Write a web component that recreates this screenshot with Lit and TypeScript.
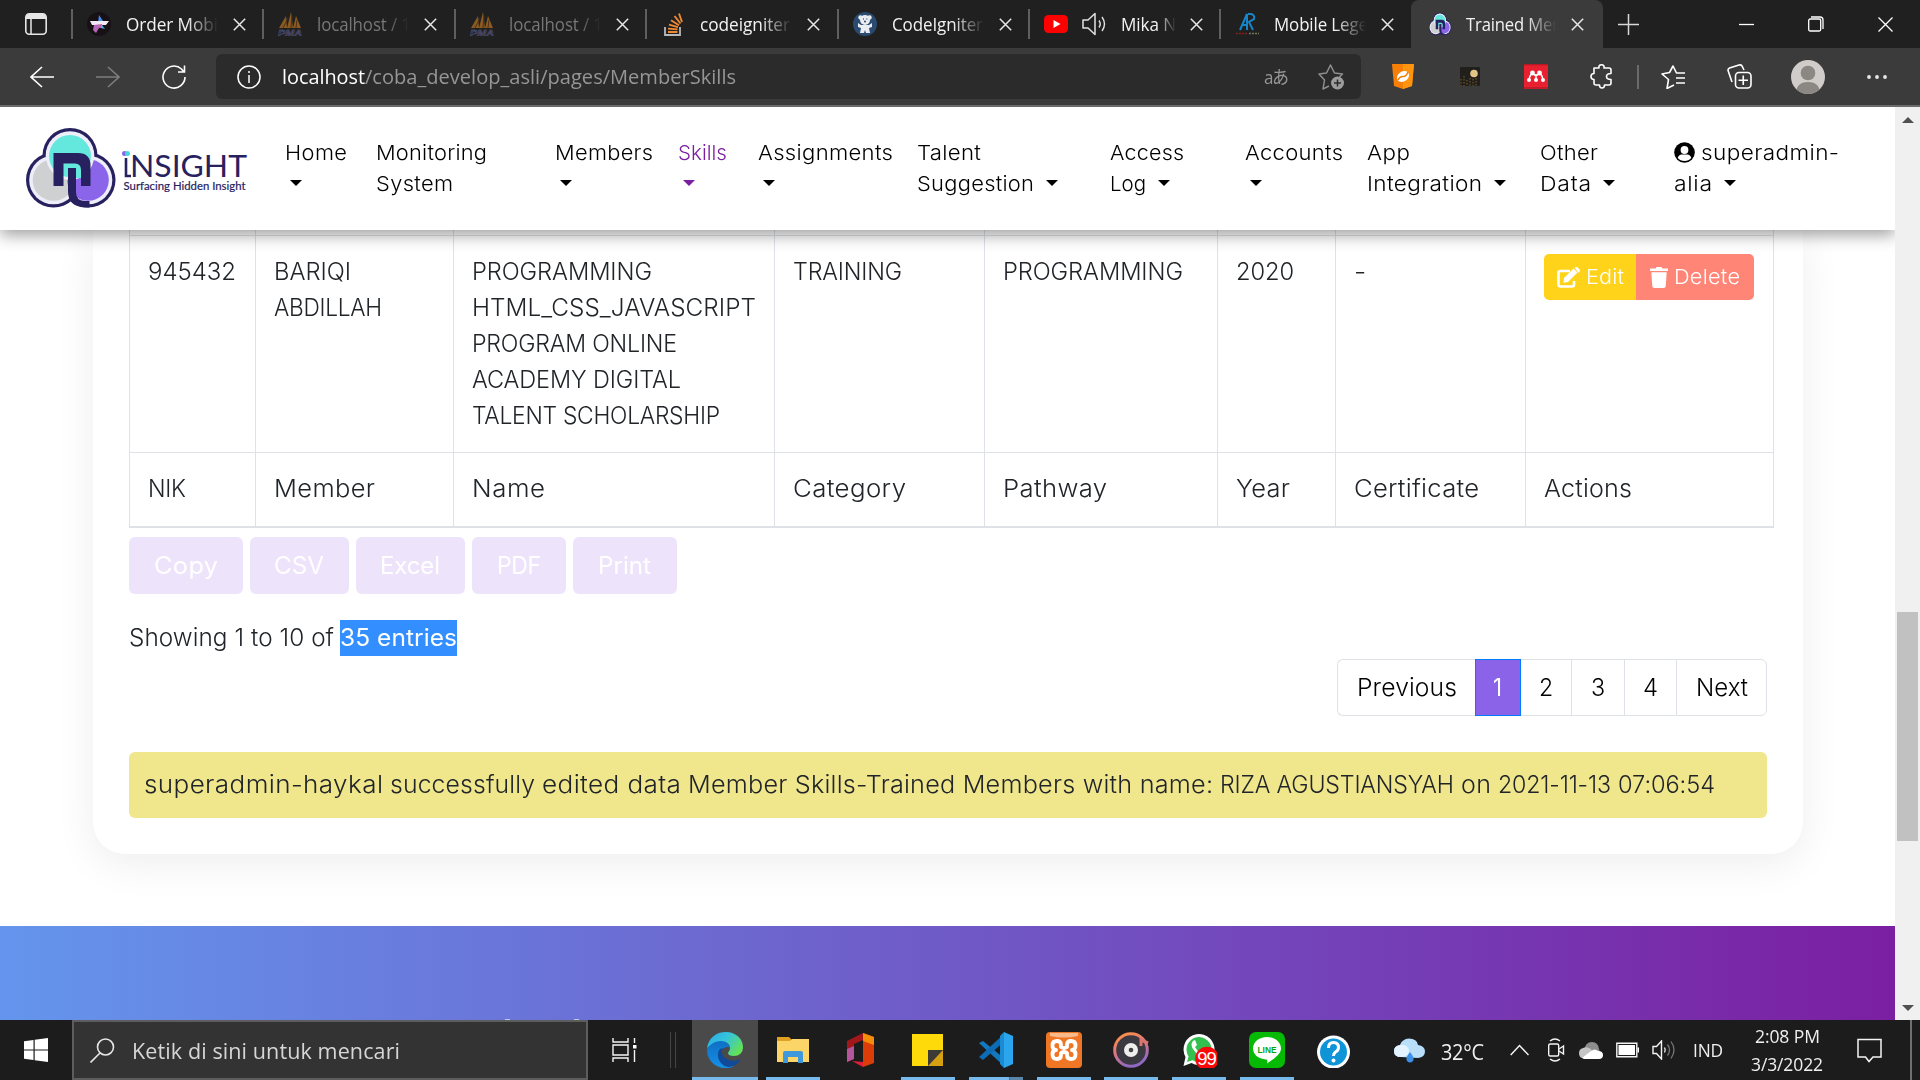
import { LitElement, html, css, svg, nothing } from "lit";
import { customElement, property } from "lit/decorators.js";
import { classMap } from "lit/directives/class-map.js";
import { styleMap } from "lit/directives/style-map.js";

/** One line of text whose glyph width and tracking are adjusted so that it fills a given width. */
@customElement("fit-text")
class FitText extends LitElement {
  @property({ type: Number }) w = 0;
  @property() t = "";

  static styles = css`
    :host { display: inline-block; white-space: pre; }
    .run { display: inline-block; font-variant-ligatures: none; transform-origin: 0 50%; }
  `;

  render() {
    return html`<span class="run">${this.t}</span>`;
  }

  updated() {
    const run = this.renderRoot.querySelector<HTMLElement>(".run")!;
    run.style.letterSpacing = "0";
    run.style.transform = "none";
    const natural = run.getBoundingClientRect().width;
    const scale = Math.min(1.12, Math.max(0.92, 1 + (this.w / natural - 1) * 0.75));
    const step = (this.w / scale - natural) / Math.max(1, this.t.length - 1);
    run.style.letterSpacing = `${step.toFixed(3)}px`;
    run.style.marginRight = `${(this.w - this.w / scale - step).toFixed(3)}px`;
    run.style.transform = `scaleX(${scale.toFixed(4)})`;
  }
}

const fit = (t: string, w: number, cls = "") => html`<fit-text class=${cls} .t=${t} .w=${w}></fit-text>`;

const icon = (w: number, h: number, body: unknown, cls = "") =>
  html`<svg class="ico ${cls}" width=${w} height=${h} viewBox="0 0 ${w} ${h}" fill="none">${body}</svg>`;

const cloverMark = svg`
  <g fill="#27225f"><circle cx="55" cy="35.5" r="27.5"/><circle cx="38.500" cy="60" r="27.500"/><circle cx="73" cy="60" r="27.500"/></g>
  <g fill="#eeeef8"><circle cx="38.500" cy="60" r="24.300"/><circle cx="73" cy="60" r="24.300"/><circle cx="55" cy="35.500" r="24.300"/></g>
  <circle cx="38.500" cy="60" r="20.800" fill="#cfd0d2"/>
  <circle cx="73" cy="60" r="20.800" fill="#8a65ea"/>
  <circle cx="55" cy="36" r="24" fill="#eeeef8"/>
  <circle cx="55" cy="36" r="21" fill="#64e8dd"/>
  <path d="M48 44v12h5v-8h8v10h5V50q0-6-6-6z" fill="#64e8dd"/>
  <path d="M38.500 33H63q12.500 0 12.500 12.500V66H66V50q0-6.500-6-6.500H48.500V66h-10z" fill="#27225f"/>
  <path d="M53 48h8v24q0 8.500 8.500 9h5v6.500h-5Q53 86.500 53 71z" fill="#27225f"/>`;

const closeX = icon(13, 13, svg`<path d="M.8.8l11.400 11.400M12.200.8L.8 12.200" stroke="#e8e8e8" stroke-width="1.500"/>`);

const pma = icon(24, 24, svg`
  <path d="M1 16L8 4l1 12zM9 16L13 0l2 16zM15 16l3-12 5 12z" fill="#8a5a22"/>
  <path d="M5 16l5-10M13 16l1-12M18 16l1-8" stroke="#4b3216"/>
  <text x="0" y="24" font-size="9.500" font-weight="700" font-style="italic" font-family="Liberation Sans, sans-serif" fill="#24243c" stroke="#66668a" stroke-width=".4" textLength="24" lengthAdjust="spacingAndGlyphs">PMA</text>`);

const favicons = {
  order: icon(24, 24, svg`<circle cx="12" cy="12" r="12" fill="#171116"/><path d="M12 3l4 6-5 2z" fill="#4a8df0"/><path d="M3 9h19l-3 4H5z" fill="#f3e9f4"/><path d="M7 13l8-1 1 4-4 0-3 5-3-3z" fill="#b566b5"/><path d="M14 12l4 5-4-1z" fill="#46b3ec"/>`),
  pma,
  stack: icon(24, 24, svg`<path d="M4 15v8h15v-8" stroke="#b6b9bb" stroke-width="1.800"/><path d="M7 20h9.500M7 16.600l9.500.8M8 12.600l9 2.500M10 8.300l8 5M13.500 4l6 7.500M18 1.500l3 8.500" stroke="#f08a32" stroke-width="1.900"/>`),
  bear: icon(24, 24, svg`<circle cx="12" cy="12" r="12" fill="#2b4a70"/><g fill="#e9edf1"><circle cx="7.500" cy="5.500" r="2.200"/><circle cx="16.500" cy="5.500" r="2.200"/><circle cx="12" cy="8" r="5"/><path d="M5 11l3 2h8l3-2v4l-3 1 1 5h-4l-1-3-1 3H7l1-5-3-1z"/></g><path d="M10 7h.8M13.500 7h.8M11 9.500h2" stroke="#2b4a70" stroke-width="1.300"/>`),
  youtube: icon(24, 18, svg`<rect width="24" height="18" rx="4.500" fill="#f00"/><path d="M9.500 5l7 4-7 4z" fill="#fff"/>`),
  ar: icon(24, 24, svg`<path d="M5 18L12 2v16M8 13h4M13 2h3q4 1 3 5l-5 3 4 8" stroke="#1686c9" stroke-width="2"/><path d="M1 21.500h12" stroke="#8d1d1d" stroke-width="1.500" stroke-dasharray="2 1"/><path d="M14 21.500h10" stroke="#777760" stroke-width="1.500" stroke-dasharray="2 1"/>`),
  clover: html`<svg class="ico" width="24" height="24" viewBox="8 6 95 84" preserveAspectRatio="none">${cloverMark}</svg>`,
};

const speaker = icon(24, 24, svg`<path d="M1 8h5l7-6.500v21L6 16H1z" stroke="#e2e2e2" stroke-width="1.500" stroke-linejoin="round"/><path d="M17 8.500q2.500 3.500 0 7M20 5q5 7 0 14" stroke="#e2e2e2" stroke-width="1.400"/>`);

interface Tab { fav: keyof typeof favicons; title: string; w: number; dim?: boolean; sound?: boolean; active?: boolean }
const tabs: Tab[] = [
  { fav: "order", title: "Order Mobi", w: 92 },
  { fav: "pma", title: "localhost / 1", w: 94, dim: true },
  { fav: "pma", title: "localhost / 1", w: 94, dim: true },
  { fav: "stack", title: "codeigniter", w: 90 },
  { fav: "bear", title: "CodeIgniter", w: 91 },
  { fav: "youtube", title: "Mika N", w: 55, sound: true },
  { fav: "ar", title: "Mobile Lege", w: 94 },
  { fav: "clover", title: "Trained Mer", w: 93, active: true },
];

interface NavItem { col: number; a: string; aw: number; b?: string; bw?: number; caret?: boolean; active?: boolean; user?: boolean }
const nav: NavItem[] = [
  { col: 90.5, a: "Home", aw: 62, caret: true },
  { col: 179, a: "Monitoring", aw: 111, b: "System", bw: 77 },
  { col: 123, a: "Members", aw: 98, caret: true },
  { col: 80, a: "Skills", aw: 49, caret: true, active: true },
  { col: 159.5, a: "Assignments", aw: 135, caret: true },
  { col: 193, a: "Talent", aw: 64, b: "Suggestion", bw: 117, caret: true },
  { col: 135, a: "Access", aw: 74, b: "Log", bw: 36, caret: true },
  { col: 122, a: "Accounts", aw: 98, caret: true },
  { col: 173, a: "App", aw: 43, b: "Integration", bw: 115, caret: true },
  { col: 134, a: "Other", aw: 58, b: "Data", bw: 51, caret: true },
  { col: 180, a: "superadmin-", aw: 138, b: "alia", bw: 38, caret: true, user: true },
];

type Line = [string, number];
const row: Line[][] = [
  [["945432", 88]],
  [["BARIQI", 77], ["ABDILLAH", 108]],
  [["PROGRAMMING", 180], ["HTML_CSS_JAVASCRIPT", 284], ["PROGRAM ONLINE", 205], ["ACADEMY DIGITAL", 209], ["TALENT SCHOLARSHIP", 248]],
  [["TRAINING", 109]],
  [["PROGRAMMING", 180]],
  [["2020", 58]],
  [["-", 13]],
];
const foot: Line[] = [["NIK", 38], ["Member", 101], ["Name", 73], ["Category", 113], ["Pathway", 104], ["Year", 54], ["Certificate", 125], ["Actions", 88]];
const exportsBar: [string, number, number][] = [["Copy", 64, 114], ["CSV", 50, 99], ["Excel", 60, 109.5], ["PDF", 44, 94], ["Print", 53, 104]];
const pages: [string, number, number, boolean][] = [["Previous", 100, 138, false], ["1", 8, 46, true], ["2", 14, 50, false], ["3", 14, 53, false], ["4", 15, 52, false], ["Next", 52, 91, false]];
const notice: Line[] = [
  ["superadmin-haykal", 239],
  ["successfully", 145],
  ["edited data", 139],
  ["Member Skills-Trained Members with name:", 525],
  ["RIZA AGUSTIANSYAH", 234],
  ["on", 30],
  ["2021-11-13", 113],
  ["07:06:54", 97],
];

const apps = [
  { bar: 66, cls: "current", art: svg`
    <defs><linearGradient id="eg" x1="0" y1="0" x2="1" y2=".6"><stop offset="0" stop-color="#2aa8e8"/><stop offset=".5" stop-color="#35c3dc"/><stop offset="1" stop-color="#62e05a"/></linearGradient>
    <linearGradient id="eb" x1="0" y1="0" x2="0" y2="1"><stop offset="0" stop-color="#0f6fc4"/><stop offset="1" stop-color="#1590e6"/></linearGradient></defs>
    <path d="M0 17C1 6 9 0 19 0c10 0 17 7 17 15 0 6-4 9-9 9-4 0-6-1-6-3 0-1 2-2 2-5 0-4-4-6-8-6C8 10 2 13 0 17z" fill="url(#eg)"/>
    <path d="M0 18c2-5 7-9 14-9 5 0 9 3 9 7-2-2-9-1-9 6 0 8 7 12 13 12-3 2-7 2-9 2C8 36 0 28 0 18z" fill="url(#eb)"/>
    <path d="M13 17c-3 3-3 11 2 15 5 5 13 4 19-5-6 3-13 2-17-2-2-3-3-5-1-9z" fill="#114a99"/>` },
  { bar: 54, art: svg`<path d="M2 5h12l3 3v4H2z" fill="#e0a021"/><path d="M2 9h13l2-2h17v23H2z" fill="#fbd568"/><path d="M8 31V21q0-2 2-2h16q2 0 2 2v10h-5v-6H13v6z" fill="#3f97dc"/>` },
  { bar: 0, art: svg`<path d="M4 9L20 1v7l-9 4v15l-7 3z" fill="#a3171b"/><path d="M4 17l7-3v13l-7 3z" fill="#b4569b"/><path d="M20 1l11 4v26l-11 4z" fill="#dc3d08"/><path d="M20 1l11 4v8l-11-4z" fill="#f48d0c"/><path d="M9 29l11 1v5z" fill="#e01e37"/>` },
  { bar: 54, art: svg`<path d="M2 2h31v19L20 34H2z" fill="#ffda0b"/><path d="M18 34V19l15-1v16z" fill="#d6a013"/><path d="M18 34V18h15z" fill="#3e3a35"/>` },
  { bar: 54, cls: "split", art: svg`<path d="M1 11l4-2 22 18v8z" fill="#1279c0"/><path d="M1 25l4 3L27 9V1z" fill="#0d6cb5"/><path d="M26 0l9 4v28l-9 4z" fill="#2ba6ee"/><path d="M26 0v36l-4-4V4z" fill="#1b8bd4"/>` },
  { bar: 54, art: svg`<rect width="36" height="36" rx="4" fill="#ef7624"/><path d="M4 1h28v3q-14 3-28 0z" fill="#f9b98a"/><path d="M15 13q0-4-4-4-4.500 0-4.500 4.500Q6.500 18 10 18q-3.500 0-3.500 4.500T11 27q4 0 4-4v-2q3-2 6 0v2q0 4 4 4 4.500 0 4.500-4.500Q29.500 18 26 18q3.500 0 3.500-4.500T25 9q-4 0-4 4v2q-3 2-6 0z" stroke="#fff" stroke-width="3.800" stroke-linejoin="round"/>` },
  { bar: 54, art: svg`<defs><linearGradient id="dg" x1="0" y1="0" x2=".4" y2="1"><stop offset="0" stop-color="#ff9440"/><stop offset=".5" stop-color="#e0777d"/><stop offset="1" stop-color="#8f6ac2"/></linearGradient></defs><circle cx="18" cy="18" r="16.300" stroke="url(#dg)" stroke-width="3" fill="#3a3840"/><circle cx="18" cy="18" r="7" fill="#eee"/><circle cx="18" cy="18" r="2.300" fill="#444"/><path d="M28 14V8l7 3" stroke="#d9776e" stroke-width="3"/>` },
  { bar: 54, art: svg`<path d="M2.500 34l2-9a15.500 15.500 0 1 1 6 6z" fill="#fff"/><path d="M6 30l1.600-5.500a12.500 12.500 0 1 1 4 3.800z" fill="#34c04e"/><path d="M12 9q-3 3 0 8 4 6 9 8 4 0 5-4l-4-2-2 2q-4-2-6-6l2-2-2-5z" fill="#fff"/><circle cx="26" cy="26.500" r="11.800" fill="#fb0909"/><text x="26" y="33" text-anchor="middle" font-size="18.500" font-family="Liberation Sans, sans-serif" fill="#fff" textLength="19.500">99</text>` },
  { bar: 54, art: svg`<rect width="36" height="36" rx="7" fill="#05b905"/><path d="M18 5c8 0 14 5 14 11.500 0 6-8 11-14 15 1-3 0-4-1-4C9 27 4 22 4 16.500 4 10 10 5 18 5z" fill="#fff"/><text x="18" y="20.500" text-anchor="middle" font-size="9.500" font-weight="700" font-family="Liberation Sans, sans-serif" fill="#0aa50a" textLength="19" lengthAdjust="spacingAndGlyphs">LINE</text>` },
  { bar: 0, art: svg`<circle cx="16.500" cy="20" r="16.500" fill="#fff"/><circle cx="16.500" cy="20" r="13.500" fill="#0f94d8"/><path d="M11.500 16q0-5.500 5-5.500t5 5q0 3-3 4.500-2 1.500-2 4" stroke="#fff" stroke-width="3"/><circle cx="16.500" cy="28.500" r="2" fill="#fff"/>` },
];

@customElement("app-root")
class AppRoot extends LitElement {
  static styles = css`
    :host { display: block; width: 1920px; height: 1080px; overflow: hidden; }
    * { box-sizing: border-box; }
    .screen { width: 1920px; height: 1080px; display: flex; flex-direction: column; background: #fff; font-family: Inter, "Open Sans", sans-serif; }
    .ico { display: block; flex: none; }

    .tabstrip { flex: none; height: 48px; background: #202020; display: flex; align-items: center; font: 17.5px/24px "Open Sans", "Noto Sans", sans-serif; color: #f2f2f2; }
    .tabmenu { width: 71px; padding-left: 25px; }
    .tab { flex: none; width: 191.4px; height: 30px; border-left: 2px solid #5f5f5f; display: flex; align-items: center; padding-left: 14px; }
    .tab.active { width: 192px; height: 48px; background: #3b3b3b; border: 0; border-radius: 8px 8px 0 0; padding-left: 17px; }
    .tab .name { width: 94px; margin-left: 15px; overflow: hidden; height: 25px; mask-image: linear-gradient(90deg, #000 65%, transparent 98%); }
    .tab.active .name { width: 92px; margin-left: 14px; }
    .tab .sound { margin-left: 14px; }
    .tab .sound + .name { width: 56px; }
    .tab .name + .ico { margin-left: 13px; }
    .dim .name { color: #777; }
    .tab.dim .name { mask-image: linear-gradient(90deg, #000 75%, transparent 98%); }
    .plus { margin-left: 15px; }
    .wincontrols { flex: 1; display: flex; justify-content: flex-end; align-items: center; gap: 54px; padding-right: 27px; }

    .toolbar { flex: none; height: 59px; background: #3b3b3b; border-bottom: 2px solid #6b6b6b; display: flex; align-items: center; padding-left: 30px; }
    .navbtns { display: flex; gap: 42px; }
    .address { margin-left: 30px; width: 1145px; height: 45px; border-radius: 6px; background: #2b2b2b; display: flex; align-items: center; padding: 0 17px 0 21px; font: 20px/28px "Open Sans", "Noto Sans", sans-serif; color: #969696; }
    .address .url { flex: 1; margin-left: 21px; }
    .host { color: #fff; }
    .aa { font: 18.5px/28px "Open Sans", "Noto Sans CJK JP", sans-serif; margin-right: 29px; }
    .exts { display: grid; grid-template-columns: 68px 63.5px 66.500px 47px 24px 66px 64px 76px 24px; margin-left: 31px; align-items: center; }
    .vbar { width: 2px; height: 24px; background: #6a6a6a; }

    .viewport { flex: none; height: 913px; display: flex; }
    .page { width: 1895px; display: flex; flex-direction: column; overflow: hidden; background: #fff; }
    .navbar { position: relative; z-index: 2; flex: none; height: 123px; background: #fff; box-shadow: 0 5px 15px rgba(0, 0, 0, .38); display: flex; color: #000; font-size: 20.500px; line-height: 31px; }
    .logo { margin: 13px 0 0 15px; width: 270px; }
    .menu { display: grid; padding-top: 30px; height: 92px; font-weight: 340; }
    .item.active { color: #7b1fa2; }
    .item { white-space: nowrap; }
    .caret { display: inline-block; border: 6px solid transparent; border-top-color: currentColor; border-bottom: 0; vertical-align: 5px; margin-left: 5px; }
    .text + .caret { margin-left: 12px; }
    .user { display: flex; height: 31px; align-items: center; gap: 6px; }

    .body { flex: none; height: 696px; padding: 0 92px 0 93px; }
    .card { height: 624px; background: #fff; border-radius: 0 0 32px 32px; box-shadow: 0 10px 40px rgba(0, 0, 0, .07); padding: 0 29px 0 36px; color: #212529; font-size: 24px; line-height: 36px; font-weight: 340; }
    .table { width: 1645px; border-right: 1px solid #dee2e6; }
    .tr { display: grid; grid-template-columns: 126px 198px 321px 210px 233px 118px 190px 248px; }
    .td { border-left: 1px solid #dee2e6; border-bottom: 1px solid #dee2e6; padding: 18px; display: flex; flex-direction: column; white-space: nowrap; }
    .peek .td { padding: 0; height: 6px; }
    .last .td { border-bottom-width: 2px; height: 75px; }
    .actions { display: flex; font-size: 20.500px; line-height: 46px; height: 46px; color: #fff; width: 210px; }
    .btn { display: flex; align-items: center; gap: 5px; padding-left: 13px; }
    .edit { width: 92px; background: #ffd31a; border-radius: 5px 0 0 5px; }
    .delete { width: 118px; background: #ff8577; border-radius: 0 5px 5px 0; gap: 6px; padding-left: 14px; }
    .exports { display: flex; gap: 6.8px; margin-top: 9px; }
    .export { height: 57px; border-radius: 6px; background: #ede3fb; color: #fff; display: flex; align-items: center; justify-content: center; font-weight: 400; }
    .info { margin-top: 26px; display: flex; gap: 6px; }
    .mark { background: #338fff; color: #fff; height: 36px; font-weight: 400; }
    .pager { width: 1638px; margin-top: 3px; display: flex; justify-content: flex-end; color: #000; }
    .pg { height: 57px; border: 1px solid #dee2e6; border-right: 0; display: flex; align-items: center; justify-content: center; }
    .pg:first-child { border-radius: 6px 0 0 6px; }
    .pg:last-child { border-radius: 0 6px 6px 0; border-right: 1px solid #dee2e6; }
    .pg.on { background: #8b63e9; border: 1px solid #007bff; color: #fff; font-weight: 400; }
    .pg.on + .pg { border-left: 0; }
    .notice { width: 1638px; margin-top: 36px; height: 66px; border-radius: 6px; background: #f0e68c; display: flex; align-items: center; gap: 7px; padding: 0 0 1px 15px; white-space: nowrap; }
    .foot { flex: 1; background: linear-gradient(90deg, #6495ed, #7b1fa2); display: flex; align-items: flex-end; gap: 64px; padding-left: 505px; }
    .speck { width: 5px; height: 1px; background: #c5c8ee; }

    .scroll { width: 25px; background: #f0f0f0; display: flex; flex-direction: column; align-items: center; padding: 10px 0 9px; }
    .thumb { width: 21px; height: 229px; background: #c1c1c1; margin: 489px 0 164px; flex: none; }

    .taskbar { flex: none; height: 60px; background: #1c1c1c; display: flex; align-items: center; color: #f0f0f0; font-family: "Open Sans", "Noto Sans", sans-serif; }
    .start { width: 72px; padding-left: 24px; }
    .search { width: 516px; height: 60px; background: #333; border: 2px solid #5d5d5d; display: flex; align-items: center; padding-left: 16px; font-size: 21px; gap: 17px; color: #d6d6d6; }
    .search fit-text { padding-top: 2px; }
    .view { margin-left: 24px; }
    .grip { margin-left: 32px; width: 6px; height: 36px; border: solid #454545; border-width: 0 1px; }
    .apps { display: flex; margin-left: 16px; }
    .app { flex: none; width: 67.7px; height: 60px; padding-top: 12px; display: flex; flex-direction: column; align-items: center; justify-content: space-between; }
    .app.current { width: 66px; margin-right: 1.200px; background: #4a4a4a; }
    .under { height: 3px; background: #76b9ed; }
    .split .under { background: linear-gradient(90deg, #76b9ed 74%, #47678a 74%, #5b86ab 77%); }
    .tray { display: grid; margin-left: 26px; grid-template-columns: 47px 69px 37px 32px 37px 36px 41px 58px 106px 53px 3px; align-items: center; }
    .temp { font-size: 21px; line-height: 28px; padding-top: 3px; }
    .ind { font-size: 18px; }
    .clock { display: flex; flex-direction: column; align-items: center; width: 72px; font-size: 18px; line-height: 28px; }
    .edge { height: 60px; width: 2px; background: #6f6f6f; }
  `;

  private renderTab(t: Tab) {
    return html`<div class=${classMap({ tab: true, active: !!t.active, dim: !!t.dim })}>
      ${favicons[t.fav]}
      ${t.sound ? html`<span class="sound">${speaker}</span>` : nothing}
      <span class="name">${fit(t.title, t.w)}</span>${closeX}
    </div>`;
  }

  private renderNav(n: NavItem) {
    const caret = n.caret ? html`<i class="caret"></i>` : nothing;
    const head = fit(n.a, n.aw);
    return html`<div class=${classMap({ item: true, active: !!n.active })}>
      <div>${n.user
        ? html`<span class="user">${icon(21, 21, svg`<circle cx="10.500" cy="10.500" r="10.300" fill="#000"/><circle cx="10.500" cy="8" r="3.900" fill="#fff"/><path d="M3.700 16q1-3.500 4-3.500h5.600q3 0 4 3.500-2.500 3-6.800 3t-6.800-3z" fill="#fff"/>`)}${head}</span>`
        : head}</div>
      <div>${n.b ? fit(n.b, n.bw!, "text") : nothing}${caret}</div>
    </div>`;
  }

  render() {
    const s = "#f4f4f4";
    return html`<div class="screen">
      <div class="tabstrip">
        <div class="tabmenu">${icon(22, 22, svg`<rect x=".8" y=".8" width="20.400" height="20.400" rx="3.500" stroke="#e6e6e6" stroke-width="1.600"/><path d="M1 6V4q0-3 3-3h14q3 0 3 3v2z" fill="#e6e6e6"/><path d="M6 6v15" stroke="#e6e6e6" stroke-width="1.500"/>`)}</div>
        ${tabs.map((t) => this.renderTab(t))}
        <div class="plus">${icon(21, 21, svg`<path d="M10.500 0v21M0 10.500h21" stroke="#d8d8d8" stroke-width="1.500"/>`)}</div>
        <div class="wincontrols">
          ${icon(15, 15, svg`<path d="M0 7.500h15" stroke="#fff" stroke-width="1.300"/>`)}
          ${icon(16, 16, svg`<rect x=".7" y="3" width="12" height="12" rx="1.500" stroke="#fff" stroke-width="1.300"/><path d="M3 1h9q3 0 3 3v9" stroke="#fff" stroke-width="1.300"/>`)}
          ${icon(15, 15, svg`<path d="M.5.5l14 14M14.500.5l-14 14" stroke="#fff" stroke-width="1.300"/>`)}
        </div>
      </div>

      <div class="toolbar">
        <div class="navbtns">
          ${icon(24, 24, svg`<path d="M12 2L1 12l11 10M1 12h23" stroke="#fff" stroke-width="1.600"/>`)}
          ${icon(24, 24, svg`<path d="M12 2l11 10-11 10M0 12h23" stroke="#7d7d7d" stroke-width="1.600"/>`)}
          ${icon(24, 24, svg`<path d="M23 12A11 11 0 1 1 19.500 4L22 7M22.500.5V7H16" stroke="#fff" stroke-width="1.600"/>`)}
        </div>
        <div class="address">
          ${icon(24, 24, svg`<circle cx="12" cy="12" r="11" stroke="#fff" stroke-width="1.500"/><path d="M12 10v8M12 6v2" stroke="#fff" stroke-width="1.500"/>`)}
          <span class="url">${fit("localhost", 83, "host")}${fit("/coba_develop_asli/pages/MemberSkills", 371)}</span>
          <span class="aa">${fit("aあ", 25)}</span>
          ${icon(26, 26, svg`<path d="M11 22l-6 3 1.500-9L1 10l7.500-1L12.500 1l4 8 8 1-3 3" stroke="#8e8e8e" stroke-width="1.500" stroke-linejoin="round"/><circle cx="19.500" cy="19" r="6.500" fill="#9c9c9c"/><path d="M19.500 15.500v7M16 19h7" stroke="#2b2b2b" stroke-width="1.500"/>`)}
        </div>
        <div class="exts">
          ${icon(22, 25, svg`<path d="M0 0h22l-2 22-9 3-9-3z" fill="#f77f06"/><path d="M11 0h11l-2 22-9 3z" fill="#ff950e"/><ellipse cx="11" cy="12.500" rx="6.500" ry="5" transform="rotate(-35 11 12.500)" fill="#fff"/><path d="M6 16q2-4 5-3.500t5-4.500" stroke="#f77f06" stroke-width="1.500"/>`)}
          ${icon(20, 20, svg`<rect width="20" height="19" rx="1" fill="#211f1c"/><circle cx="14" cy="6.500" r="3.800" fill="#e3c486"/><path d="M1 12v7M4 9v10M7 13v6M10 11v8M13 12v7M16 11v8" stroke="#5f4b1f" stroke-dasharray="1.500 1.500" stroke-width="1.500"/>`)}
          ${icon(24, 25, svg`<path d="M0 0h24v25H0z" fill="#e8202f"/><path d="M0 .8h24M0 24h24" stroke="#a31722"/><path d="M5 16q.5-4 3-7l4 3 4-3q2.500 3 3 7M12 10v6" stroke="#fff" stroke-width="1.600"/><g fill="#fff"><circle cx="5" cy="16" r="2"/><circle cx="12" cy="16" r="2"/><circle cx="19" cy="16" r="2"/><circle cx="8.500" cy="9" r="2.400"/><circle cx="15.500" cy="9" r="2.400"/></g>`)}
          ${icon(23, 25, svg`<path d="M4 4h5q-.5-3.200 2.500-3.200T14 4h5q2 0 2 2v3.500q-4.500 0-4.500 3t4.500 3V19q0 2-2 2h-4.500q0 3-2.500 3t-2.500-3H6q-2 0-2-2v-3.500q-3 0-3-3t3-3z" stroke="#fff" stroke-width="1.600" stroke-linejoin="round"/>`)}
          <i class="vbar"></i>
          ${icon(24, 24, svg`<path d="M13 20l-7 3.500 1.500-9L1 9l7.500-1.500L12 1l3.500 7H24M15 13h9M15 18h9" stroke="#fff" stroke-width="1.600" stroke-linejoin="round"/>`)}
          ${icon(25, 25, svg`<path d="M5 18L1.200 7q-.7-2 1.300-3L12 1q2-.5 3 1l2 4" stroke="#fff" stroke-width="1.600"/><rect x="8.500" y="8.500" width="15.500" height="15.500" rx="3.500" stroke="#fff" stroke-width="1.600"/><path d="M16.250 11.500v9.500M11.500 16.250H21" stroke="#fff" stroke-width="1.600"/>`)}
          ${icon(34, 34, svg`<clipPath id="av"><circle cx="17" cy="17" r="17"/></clipPath><g clip-path="url(#av)"><path d="M0 0h34v34H0z" fill="#cfccc9"/><circle cx="17" cy="13" r="7.300" fill="#8b8783"/><path d="M5 34q0-12 12-12t12 12z" fill="#8b8783"/></g>`)}
          ${icon(20, 6, svg`<g fill="#e8e8e8"><circle cx="2" cy="3" r="1.900"/><circle cx="10" cy="3" r="1.900"/><circle cx="18" cy="3" r="1.900"/></g>`)}
        </div>
      </div>

      <div class="viewport">
        <div class="page">
          <div class="navbar">
            <svg class="logo" width="270" height="100" viewBox="0 0 270 100">
              ${cloverMark}
              <path d="M111 38v18h5" stroke="#27225f" stroke-width="2.600" fill="none"/>
              <circle cx="109.500" cy="33.500" r="2.500" fill="#8a65ea"/><circle cx="112.500" cy="33.500" r="2.500" fill="#43d9d9"/>
              <text x="115" y="57" font-family="Lato, sans-serif" font-size="31" fill="#27225f" textLength="117" lengthAdjust="spacingAndGlyphs">NSIGHT</text>
              <text x="108.500" y="70" font-family="Lato, sans-serif" font-size="12" fill="#27225f" stroke="#27225f" stroke-width=".2" textLength="122" lengthAdjust="spacingAndGlyphs">Surfacing Hidden Insight</text>
            </svg>
            <div class="menu" style=${styleMap({ gridTemplateColumns: nav.map((n) => `${n.col}px`).join(" ") })}>
              ${nav.map((n) => this.renderNav(n))}
            </div>
          </div>

          <div class="body">
            <div class="card">
              <div class="table">
                <div class="tr peek">${foot.map(() => html`<div class="td"></div>`)}</div>
                <div class="tr">
                  ${row.map((c) => html`<div class="td">${c.map(([t, w]) => html`<span>${fit(t, w)}</span>`)}</div>`)}
                  <div class="td"><div class="actions">
                    <div class="btn edit">${icon(24, 21, svg`<path d="M13 4H3.500Q1.500 4 1.500 6v11.500q0 2 2 2H15q2 0 2-2V14" stroke="#fff" stroke-width="2.600"/><path d="M7 11L16.500 1.500l4 4L11 15l-4.500.8z" fill="#fff"/><path d="M17.500.8l1-.6q1.500-.5 2.500.5l1.500 1.500q1 1.500 0 2.500l-1 1z" fill="#fff"/>`)}${fit("Edit", 38)}</div>
                    <div class="btn delete">${icon(18, 21, svg`<path d="M0 1.500h5.500L6.500 0h5l1 1.500H18V4H0zM1.300 5.200h15.400l-1 14q-.1 1.800-2 1.800H4.300q-1.900 0-2-1.800z" fill="#fff"/>`)}${fit("Delete", 66)}</div>
                  </div></div>
                </div>
                <div class="tr last">${foot.map(([t, w]) => html`<div class="td"><span>${fit(t, w)}</span></div>`)}</div>
              </div>
              <div class="exports">${exportsBar.map(([t, w, bw]) => html`<div class="export" style=${styleMap({ width: `${bw}px` })}>${fit(t, w)}</div>`)}</div>
              <div class="info">${fit("Showing 1 to 10 of", 205)}<span class="mark">${fit("35 entries", 117)}</span></div>
              <div class="pager">${pages.map(([t, w, bw, on]) => html`<div class=${classMap({ pg: true, on })} style=${styleMap({ width: `${bw}px` })}>${fit(t, w)}</div>`)}</div>
              <div class="notice">${notice.map(([t, w]) => fit(t, w))}</div>
            </div>
          </div>
          <div class="foot"><i class="speck"></i><i class="speck"></i></div>
        </div>
        <div class="scroll">
          ${icon(12, 6, svg`<path d="M0 6l6-6 6 6z" fill="#505050"/>`)}
          <div class="thumb"></div>
          ${icon(12, 6, svg`<path d="M0 0h12L6 6z" fill="#505050"/>`)}
        </div>
      </div>

      <div class="taskbar">
        <div class="start">${icon(24, 24, svg`<path d="M0 3.300l9.500-1.300v9.500H0zM10.700 1.800L24 0v11.500H10.700zM0 12.600h9.500V22L0 20.700zM10.700 12.600H24V24l-13.300-1.800z" fill="#fff"/>`)}</div>
        <div class="search">${icon(25, 25, svg`<circle cx="15.500" cy="9" r="8" stroke="#e6e6e6" stroke-width="1.600"/><path d="M10 15L.5 24.500" stroke="#e6e6e6" stroke-width="1.600"/>`)}${fit("Ketik di sini untuk mencari", 268)}</div>
        <div class="view">${icon(26, 24, svg`<path d="M1 0v4h15V0M1 24v-4h15v4M1 7h15v10H1zM22.500 0v5M22.500 12v12" stroke=${s} stroke-width="1.400"/><path d="M21 7h3.500v3.500H21z" fill="#fff"/>`)}</div>
        <i class="grip"></i>
        <div class="apps">${apps.map((a) => html`<div class="app ${a.cls ?? ""}">${icon(36, 36, a.art)}<i class="under" style=${styleMap({ width: `${a.bar}px` })}></i></div>`)}</div>
        <div class="tray">
          ${icon(31, 25, svg`<path d="M7 19q-7 0-7-6 0-5 6-6 2-6 9-6.500 8 0 9 6.500 7 1 7 6.500T24 20z" fill="#b8defa"/><path d="M7 19q-7 0-7-6 0-5 6-6 7-1 9 5 1 7-8 7z" fill="#e3f3ff"/><path d="M16 14q5 6 3 9-3 3-6 0-2-3 3-9z" fill="#3d8fe8"/>`)}
          <span class="temp">${fit("32°C", 43)}</span>
          ${icon(19, 12, svg`<path d="M.7 11L9.500 1.500l9 9.500" stroke=${s} stroke-width="1.500"/>`)}
          ${icon(18, 24, svg`<rect x="1.700" y="6" width="10" height="12" rx="1.500" stroke=${s} stroke-width="1.400"/><path d="M12 11l4.500-3v8L12 13M3 3q5-4 10 0M3 21q5 4 10 0" stroke=${s} stroke-width="1.400"/>`)}
          ${icon(24, 18, svg`<path d="M5 10Q6 1 13 1q6 0 7 7l2 6H4z" fill="#8d8d8d"/><path d="M0 12q0-4 4-5 5-2 9 2l-7 8H4q-4 0-4-5z" fill="#c4c4c4"/><path d="M3 17l9-7q4-3 7 0 5 0 5 4t-4 4H5z" fill="#fff"/>`)}
          ${icon(24, 16, svg`<path d="M.8 1.200h20v13.500H.8z" stroke=${s} stroke-width="1.400"/><path d="M2.500 3h16.500v10H2.500zM21.500 5.500H23v5h-1.500z" fill="#fff"/>`)}
          ${icon(24, 20, svg`<path d="M1 6.500h3.500L9.500 1v18l-5-5.500H1z" stroke=${s} stroke-width="1.400"/><path d="M12.500 7.500q1.500 2.500 0 5" stroke=${s} stroke-width="1.300"/><path d="M15.500 4.500q4 5.500 0 11M19 1.500q6 8.500 0 17" stroke="#777" stroke-width="1.300"/>`)}
          <span class="ind">${fit("IND", 30)}</span>
          <span class="clock">${fit("2:08 PM", 65)}${fit("3/3/2022", 72)}</span>
          ${icon(25, 25, svg`<path d="M1 1.500h23V19h-8l-4 4.500L8.500 19H1z" stroke=${s} stroke-width="1.500"/>`)}
          <i class="edge"></i>
        </div>
      </div>
    </div>`;
  }
}
